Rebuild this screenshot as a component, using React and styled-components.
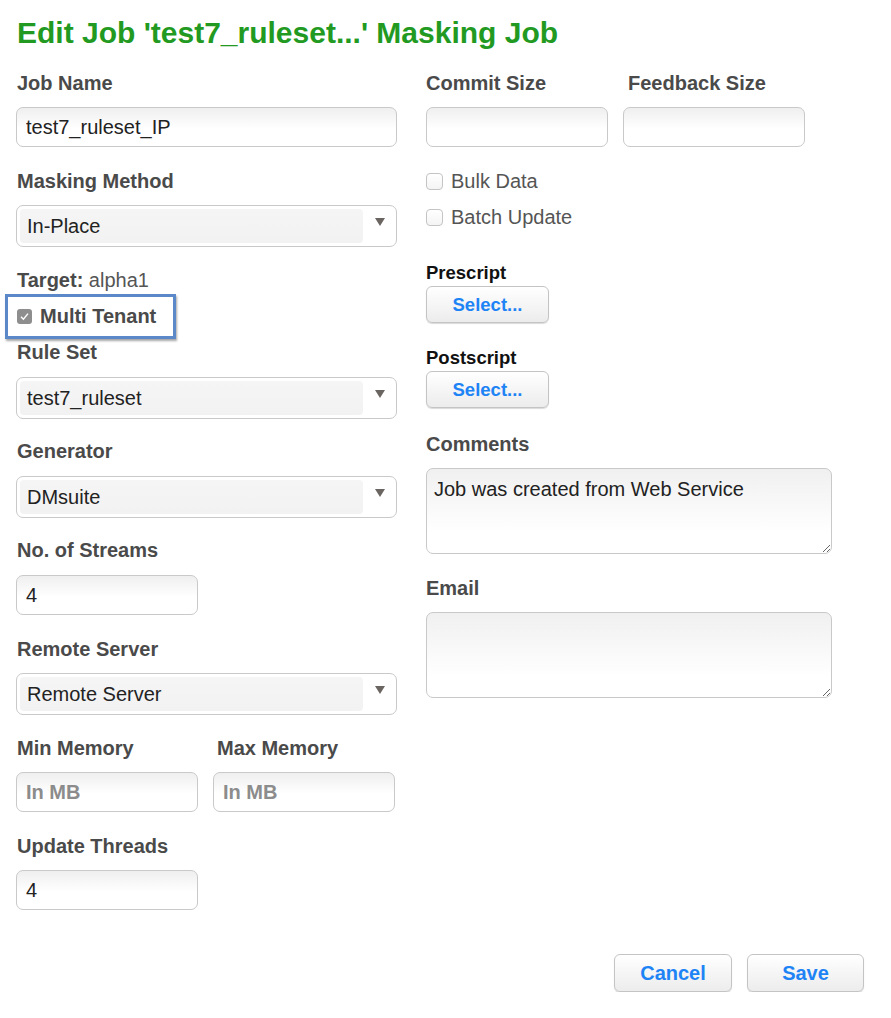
import React from "react";
import styled, { createGlobalStyle } from "styled-components";

const GlobalStyle = createGlobalStyle`
  html, body { margin: 0; padding: 0; background: #ffffff; }
  body { font-family: "Liberation Sans", Arial, Helvetica, sans-serif; color: #222; }
  * { box-sizing: border-box; }
`;

const Page = styled.div`
  width: 891px;
  padding: 15px 27px 0 16px;
`;

const Title = styled.h1`
  margin: 0 0 20px 1px;
  font-size: 30px;
  line-height: 36px;
  font-weight: 700;
  color: #229a22;
`;

const Columns = styled.div`
  display: grid;
  grid-template-columns: 381px 406px;
  column-gap: 29px;
  align-items: start;
`;

const Column = styled.div`
  display: flex;
  flex-direction: column;
`;

const Field = styled.div`
  display: flex;
  flex-direction: column;
  gap: ${(p) => p.$gap ?? 12}px;
  margin-bottom: ${(p) => p.$mb ?? 0}px;
`;

const Label = styled.div`
  font-size: 20px;
  line-height: 24px;
  font-weight: 700;
  color: #4a4a4a;
  padding-left: ${(p) => p.$indent ?? 1}px;
  white-space: nowrap;
`;

const ScriptLabel = styled.div`
  font-size: 18.5px;
  line-height: 22px;
  font-weight: 700;
  color: #111;
`;

const TextInput = styled.input`
  width: ${(p) => p.$w ?? 381}px;
  height: 40px;
  border: 1px solid #c9c9c9;
  border-radius: 7px;
  background: linear-gradient(#efefef, #ffffff 55%);
  padding: 0 9px;
  font-family: inherit;
  font-size: 20px;
  color: #222;
  outline: none;
  &::placeholder {
    color: #8c8c8c;
    font-weight: 700;
  }
`;

const Pair = styled.div`
  display: grid;
  grid-template-columns: ${(p) => p.$col}px ${(p) => p.$col}px;
  column-gap: 15px;
`;

const SelectBox = styled.div`
  position: relative;
  width: 381px;
  height: 42px;
  border: 1px solid #c9c9c9;
  border-radius: 7px;
  background: #ffffff;
  padding: 3px 33px 3px 3px;
  display: flex;
`;

const SelectInner = styled.div`
  flex: 1;
  background: linear-gradient(#f5f5f5, #f2f2f2);
  border-radius: 4px;
  font-size: 20px;
  line-height: 34px;
  padding-left: 7px;
  color: #222;
`;

const Arrow = styled.svg`
  position: absolute;
  right: 11px;
  top: 12px;
  width: 10px;
  height: 8px;
`;

const Plain = styled.div`
  font-size: 20px;
  line-height: 24px;
  color: #555;
  padding-left: 1px;
  margin-bottom: ${(p) => p.$mb ?? 0}px;
  b { color: #4a4a4a; }
`;

const Highlight = styled.div`
  margin-left: -11px;
  width: 171px;
  height: 45px;
  border: 3px solid #5b88c8;
  box-shadow: 1px 2px 2px rgba(0, 0, 0, 0.35);
  display: flex;
  align-items: center;
  gap: 8px;
  padding-left: 9px;
  margin-bottom: ${(p) => p.$mb ?? 0}px;
  font-size: 20px;
  font-weight: 700;
  color: #4a4a4a;
`;

const CheckedBox = styled.span`
  width: 15px;
  height: 15px;
  border-radius: 3px;
  background: #8e8e8e;
  display: inline-flex;
  align-items: center;
  justify-content: center;
`;

const CheckRow = styled.label`
  height: 36px;
  display: flex;
  align-items: center;
  gap: 8px;
  font-size: 20px;
  color: #555;
`;

const EmptyBox = styled.span`
  width: 17px;
  height: 17px;
  border: 1px solid #c4c4c4;
  border-radius: 4px;
  background: linear-gradient(#ffffff, #f4f4f4);
`;

const Checks = styled.div`
  margin-top: 16px;
  margin-bottom: 27px;
`;

const Button = styled.button`
  width: ${(p) => p.$w ?? 123}px;
  height: ${(p) => p.$h ?? 37}px;
  border: 1px solid #c4c4c4;
  border-radius: 6px;
  background: linear-gradient(#ffffff, #ececec);
  box-shadow: 0 1px 1px rgba(0, 0, 0, 0.15);
  font-family: inherit;
  font-size: ${(p) => p.$fs ?? 18.5}px;
  font-weight: 700;
  color: #1e84f5;
  padding: 0;
  cursor: pointer;
`;

const ScriptField = styled.div`
  display: flex;
  flex-direction: column;
  gap: 2px;
  margin-bottom: 24px;
`;

const TextArea = styled.textarea`
  width: 406px;
  height: 86px;
  border: 1px solid #c9c9c9;
  border-radius: 7px;
  background: linear-gradient(#f0f0f0, #ffffff 75%);
  padding: 8px 7px;
  font-family: inherit;
  font-size: 20px;
  line-height: 24px;
  color: #222;
  outline: none;
  resize: both;
`;

const Footer = styled.div`
  display: flex;
  justify-content: flex-end;
  gap: 15px;
  margin-top: 44px;
`;

function Select({ value }) {
  return (
    <SelectBox>
      <SelectInner>{value}</SelectInner>
      <Arrow viewBox="0 0 10 8">
        <path d="M0 0 H10 L5 8 Z" fill="#6b6562" />
      </Arrow>
    </SelectBox>
  );
}

export default function App() {
  return (
    <>
      <GlobalStyle />
      <Page>
        <Title>Edit Job 'test7_ruleset...' Masking Job</Title>
        <Columns>
          <Column>
            <Field $mb={22}>
              <Label>Job Name</Label>
              <TextInput defaultValue="test7_ruleset_IP" />
            </Field>
            <Field $mb={21}>
              <Label>Masking Method</Label>
              <Select value="In-Place" />
            </Field>
            <Plain $mb={2}>
              <b>Target:</b> alpha1
            </Plain>
            <Highlight $mb={1}>
              <CheckedBox>
                <svg width="11" height="11" viewBox="0 0 11 11">
                  <path d="M2 5.8 L4.4 8.2 L9 2.6" fill="none" stroke="#fff" strokeWidth="1.4" />
                </svg>
              </CheckedBox>
              Multi Tenant
            </Highlight>
            <Field $gap={13} $mb={20}>
              <Label>Rule Set</Label>
              <Select value="test7_ruleset" />
            </Field>
            <Field $gap={13} $mb={20}>
              <Label>Generator</Label>
              <Select value="DMsuite" />
            </Field>
            <Field $gap={13} $mb={22}>
              <Label>No. of Streams</Label>
              <TextInput $w={182} defaultValue="4" />
            </Field>
            <Field $mb={21}>
              <Label>Remote Server</Label>
              <Select value="Remote Server" />
            </Field>
            <Pair $col={182}>
              <Field $mb={22}>
                <Label>Min Memory</Label>
                <TextInput $w={182} placeholder="In MB" />
              </Field>
              <Field $mb={22}>
                <Label $indent={4}>Max Memory</Label>
                <TextInput $w={182} placeholder="In MB" />
              </Field>
            </Pair>
            <Field>
              <Label>Update Threads</Label>
              <TextInput $w={182} defaultValue="4" />
            </Field>
          </Column>

          <Column>
            <Pair $col={182}>
              <Field>
                <Label $indent={0}>Commit Size</Label>
                <TextInput $w={182} />
              </Field>
              <Field>
                <Label $indent={5}>Feedback Size</Label>
                <TextInput $w={182} />
              </Field>
            </Pair>
            <Checks>
              <CheckRow>
                <EmptyBox />
                Bulk Data
              </CheckRow>
              <CheckRow>
                <EmptyBox />
                Batch Update
              </CheckRow>
            </Checks>
            <ScriptField>
              <ScriptLabel>Prescript</ScriptLabel>
              <Button>Select...</Button>
            </ScriptField>
            <ScriptField>
              <ScriptLabel>Postscript</ScriptLabel>
              <Button>Select...</Button>
            </ScriptField>
            <Field $mb={22}>
              <Label $indent={0}>Comments</Label>
              <TextArea defaultValue="Job was created from Web Service" />
            </Field>
            <Field>
              <Label $indent={0}>Email</Label>
              <TextArea />
            </Field>
          </Column>
        </Columns>
        <Footer>
          <Button $w={118} $h={38} $fs={20}>Cancel</Button>
          <Button $w={117} $h={38} $fs={20}>Save</Button>
        </Footer>
      </Page>
    </>
  );
}
